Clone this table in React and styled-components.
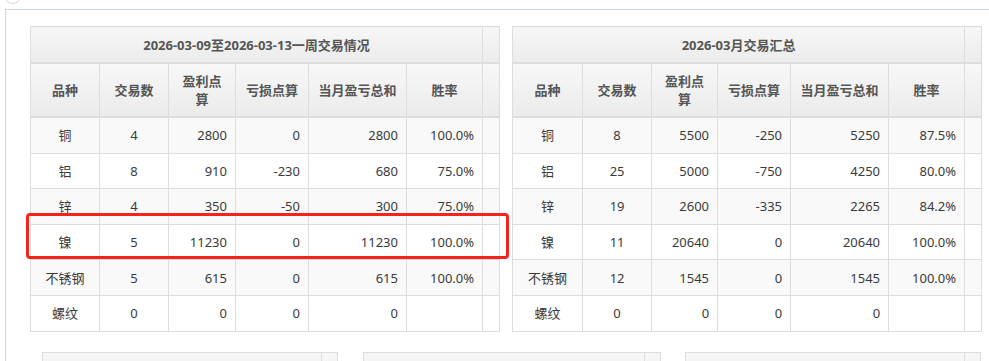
import React from 'react';
import styled, { createGlobalStyle } from 'styled-components';

const GlobalStyle = createGlobalStyle`
  html, body {
    margin: 0;
    padding: 0;
    background: #fff;
    overflow: hidden;
  }
  body {
    font-family: 'Noto Sans', 'Noto Sans CJK SC', sans-serif;
    font-size: 13px;
    color: #333;
  }
`;

const Page = styled.div`
  position: relative;
  width: 989px;
  height: 361px;
  overflow: hidden;
`;

const Dot = styled.div`
  position: absolute;
  left: 4px;
  top: -13px;
  width: 15px;
  height: 15px;
  border: 1px solid #d4d4d4;
  border-radius: 50%;
`;

const Panel = styled.div`
  margin: 9px 0 0 5px;
  width: 1010px;
  border: 1px solid #cdd5dc;
  border-right: none;
  padding: 16px 0 0 24px;
  box-sizing: border-box;
  height: 400px;
`;

const TablesRow = styled.div`
  position: relative;
  display: flex;
  gap: 12px;
`;

const Table = styled.table`
  width: 469px;
  table-layout: fixed;
  border-collapse: collapse;
  border: 1px solid #ddd;
`;

const Cell = styled.td`
  border: 1px solid #ddd;
  height: 34.6px;
  padding: 0 8px;
  text-align: ${(p) => p.$align || 'right'};
  white-space: nowrap;
  background: ${(p) => (p.$shade ? '#f9f9f9' : '#fff')};
  color: #3a3a3a;
  line-height: 16px;
`;

const HeadCell = styled.th`
  border: 1px solid #ddd;
  border-bottom: 2px solid #ddd;
  padding: 0 8px;
  font-weight: bold;
  color: #555;
  text-align: center;
  line-height: 18px;
  background: linear-gradient(#f7f7f7, #ebebeb);
  height: ${(p) => p.$h}px;
  white-space: ${(p) => (p.$wrap ? 'normal' : 'nowrap')};
`;

const Highlight = styled.div`
  position: absolute;
  left: -4px;
  top: 187px;
  width: 477px;
  height: 40px;
  border: 3px solid #f5231c;
  border-radius: 4px;
  pointer-events: none;
`;

const LowerRow = styled.div`
  display: grid;
  grid-template-columns: 296px 298px 296px;
  column-gap: 24.5px;
  margin: 20px 0 0 12px;
`;

const MiniTable = styled.div`
  display: grid;
  grid-template-columns: 1fr 16px;
  height: 40px;
  border: 1px solid #ddd;
  background: linear-gradient(#f7f7f7, #ebebeb);
`;

const MiniGutter = styled.div`
  border-left: 1px solid #ddd;
`;

const heads = ['品种', '交易数', '盈利点算', '亏损点算', '当月盈亏总和', '胜率'];

const weekRows = [
  ['铜', 4, 2800, 0, 2800, '100.0%'],
  ['铝', 8, 910, -230, 680, '75.0%'],
  ['锌', 4, 350, -50, 300, '75.0%'],
  ['镍', 5, 11230, 0, 11230, '100.0%'],
  ['不锈钢', 5, 615, 0, 615, '100.0%'],
  ['螺纹', 0, 0, 0, 0, ''],
];

const monthRows = [
  ['铜', 8, 5500, -250, 5250, '87.5%'],
  ['铝', 25, 5000, -750, 4250, '80.0%'],
  ['锌', 19, 2600, -335, 2265, '84.2%'],
  ['镍', 11, 20640, 0, 20640, '100.0%'],
  ['不锈钢', 12, 1545, 0, 1545, '100.0%'],
  ['螺纹', 0, 0, 0, 0, ''],
];

const Summary = ({ title, rows, cols }) => (
  <Table>
    <colgroup>
      {cols.map((w, i) => (
        <col key={i} style={{ width: w }} />
      ))}
    </colgroup>
    <thead>
      <tr>
        <HeadCell colSpan={6} $h={35}>{title}</HeadCell>
        <HeadCell $h={35} />
      </tr>
      <tr>
        {heads.map((h) => (
          <HeadCell key={h} $h={52} $wrap={h === '盈利点算'}>
            {h}
          </HeadCell>
        ))}
        <HeadCell $h={52} />
      </tr>
    </thead>
    <tbody>
      {rows.map((r, i) => (
        <tr key={r[0]}>
          {r.map((v, j) => (
            <Cell key={j} $shade={i % 2 === 0} $align={j < 2 ? 'center' : 'right'}>
              {v}
            </Cell>
          ))}
          <Cell $shade={i % 2 === 0} />
        </tr>
      ))}
    </tbody>
  </Table>
);

export default function App() {
  return (
    <Page>
      <GlobalStyle />
      <Dot />
      <Panel>
        <TablesRow>
          <Summary
            title="2026-03-09至2026-03-13一周交易情况"
            rows={weekRows}
            cols={[69, 69, 67, 73, 98, 76, 17]}
          />
          <Summary
            title="2026-03月交易汇总"
            rows={monthRows}
            cols={[70, 69, 66, 73, 98, 76, 17]}
          />
          <Highlight />
        </TablesRow>
        <LowerRow>
          {[0, 1, 2].map((i) => (
            <MiniTable key={i}>
              <div />
              <MiniGutter />
            </MiniTable>
          ))}
        </LowerRow>
      </Panel>
    </Page>
  );
}
